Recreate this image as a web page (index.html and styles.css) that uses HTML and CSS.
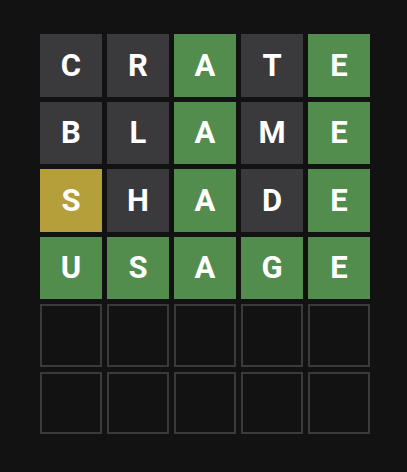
FILE: index.html
```html
<!DOCTYPE html>
<html>
<head>
<meta charset="utf-8">
<link rel="stylesheet" href="styles.css">
</head>
<body>
<div class="page">
  <div class="board">
    <div class="row">
      <div class="tile absent">C</div><div class="tile absent">R</div><div class="tile correct">A</div><div class="tile absent">T</div><div class="tile correct">E</div>
    </div>
    <div class="row">
      <div class="tile absent">B</div><div class="tile absent">L</div><div class="tile correct">A</div><div class="tile absent">M</div><div class="tile correct">E</div>
    </div>
    <div class="row">
      <div class="tile present">S</div><div class="tile absent">H</div><div class="tile correct">A</div><div class="tile absent">D</div><div class="tile correct">E</div>
    </div>
    <div class="row">
      <div class="tile correct">U</div><div class="tile correct">S</div><div class="tile correct">A</div><div class="tile correct">G</div><div class="tile correct">E</div>
    </div>
    <div class="row">
      <div class="tile empty"></div><div class="tile empty"></div><div class="tile empty"></div><div class="tile empty"></div><div class="tile empty"></div>
    </div>
    <div class="row">
      <div class="tile empty"></div><div class="tile empty"></div><div class="tile empty"></div><div class="tile empty"></div><div class="tile empty"></div>
    </div>
  </div>
</div>
</body>
</html>
```
FILE: styles.css
```css
html, body {
  margin: 0;
  padding: 0;
  background: #121213;
  height: 100%;
}
.page {
  padding: 34px 0 0 40px;
}
.board {
  width: 330px;
  height: 400px;
  display: grid;
  grid-template-rows: repeat(6, 1fr);
  gap: 5px;
}
.row {
  display: grid;
  grid-template-columns: repeat(5, 1fr);
  gap: 5px;
}
.tile {
  display: flex;
  align-items: center;
  justify-content: center;
  font-family: Roboto, "Open Sans", sans-serif;
  font-weight: 700;
  font-size: 31px;
  color: #ffffff;
  text-transform: uppercase;
  box-sizing: border-box;
}
.absent { background: #3a3a3c; }
.correct { background: #538d4e; }
.present { background: #b59f3b; }
.empty { border: 2px solid #3a3a3c; }
```
